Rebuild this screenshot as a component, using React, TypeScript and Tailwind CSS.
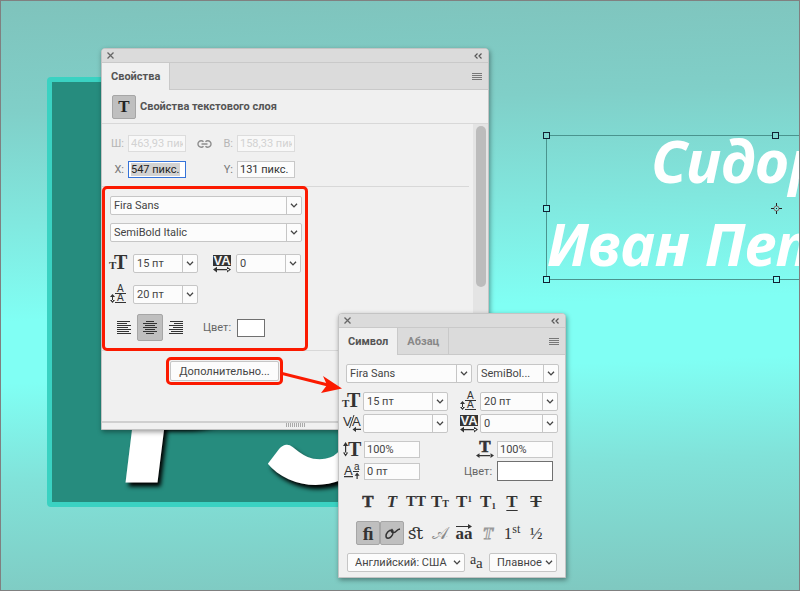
import type { ReactNode } from "react";

interface SelectProps {
    label: string;
    options: string[];
    className?: string;
    plain?: boolean;
}

const Select = ({ label, options, className = "", plain = false }: SelectProps) => (
    <span className={`relative block h-[19px] rounded-[2px] border border-[#c6c6c6] bg-[#fcfcfc] ${className}`}>
        <select
            aria-label={label}
            className={`block h-full w-full appearance-none bg-transparent outline-none ${plain ? "pl-[7px] pr-2" : "pl-[3px] pr-4"}`}
        >
            {options.map((option) => (
                <option key={option}>{option}</option>
            ))}
        </select>
        <span className={`pointer-events-none absolute inset-y-0 right-0 flex w-[15px] items-center justify-center ${plain ? "" : "border-l border-[#c6c6c6]"}`}>
            <svg width="8" height="5" viewBox="0 0 8 5" fill="none" stroke="#444" strokeWidth="1.3">
                <path d="M1 .7 4 3.9 7 .7" />
            </svg>
        </span>
    </span>
);

interface FieldProps {
    id: string;
    value: string;
    className?: string;
    disabled?: boolean;
    active?: boolean;
}

const Field = ({ id, value, className = "", disabled = false, active = false }: FieldProps) => (
    <input
        id={id}
        aria-label={id}
        defaultValue={value}
        disabled={disabled}
        autoFocus={active}
        onFocus={(e) => e.currentTarget.select()}
        className={`h-[17px] min-w-0 border px-0.5 outline-none selection:bg-[#d2d2d2] selection:text-[#222] ${
            active ? "border-[#3573d9] bg-white" : disabled ? "border-[#dcdcdc] bg-[#f8f8f8] text-[#d2d2d2]" : "border-[#c8c8c8] bg-[#fcfcfc]"
        } ${className}`}
    />
);

const serif = "font-['Liberation_Serif',serif]";

const SizeIcon = () => (
    <svg width="18" height="18" viewBox="0 0 18 18" fill="#333" className={`shrink-0 overflow-visible font-bold ${serif}`}>
        <text x="4" y="14" fontSize="20">T</text>
        <text x="-1" y="14" fontSize="11">T</text>
    </svg>
);

const LeadingIcon = () => (
    <svg width="18" height="18" viewBox="0 0 18 18" fill="#333" className="shrink-0 overflow-visible font-['Liberation_Sans',sans-serif]">
        <text x="7" y="6" fontSize="10">A</text>
        <text x="7" y="15" fontSize="10">A</text>
        <path d="M5 7h11v1H5zM5 16h11v1H5zM2 9h1v6H2zM0 11l2.500-3L5 11zM0 14l2.500 3L5 14z" />
    </svg>
);

const TrackingIcon = () => (
    <svg width="18" height="18" viewBox="0 0 18 18" className="shrink-0 font-['Liberation_Sans',sans-serif] font-bold">
        <rect width="18" height="11" fill="#333" />
        <text x="9" y="10" fontSize="13" fill="#f4f4f4" textAnchor="middle">VA</text>
        <path d="M2 14h14v1.200H2zM0 14.600l4-2.800v5.600zM18 14.600l-4-2.800v5.600z" fill="#333" />
    </svg>
);

const KerningIcon = () => (
    <svg width="18" height="18" viewBox="0 0 18 18" fill="#333" className="shrink-0 overflow-visible font-['Liberation_Sans',sans-serif]">
        <text x="0" y="11" fontSize="13">V</text>
        <text x="9" y="11" fontSize="13">A</text>
        <path d="M10.500 0h1L7 13H6zM12 13.800h6v1.200h-6zM9.500 14.400l3.500-2.700v5.400z" />
    </svg>
);

const VScaleIcon = () => (
    <svg width="18" height="16" viewBox="0 0 18 16" fill="#333" className={`shrink-0 overflow-visible font-bold ${serif}`}>
        <text x="5" y="14" fontSize="20">T</text>
        <path d="M2 3h1.200v9H2zM0 4l2.600-4 2.600 4zM0 10.500l2.600 4 2.600-4z" />
    </svg>
);

const HScaleIcon = () => (
    <svg width="18" height="17" viewBox="0 0 18 17" fill="#333" className={`shrink-0 overflow-visible font-bold ${serif}`}>
        <text x="9" y="11" fontSize="17" textAnchor="middle" stroke="#333" strokeWidth=".6">T</text>
        <path d="M3 14h12v1.200H3zM0 14.600l3.500-2.400v4.800zM18 14.600l-3.500-2.400v4.800z" />
    </svg>
);

const BaselineIcon = () => (
    <svg width="17" height="17" viewBox="0 0 17 17" fill="#333" className="shrink-0 overflow-visible font-['Liberation_Sans',sans-serif]">
        <text x="0" y="12" fontSize="13">A</text>
        <text x="10" y="7" fontSize="10">a</text>
        <path d="M0 13h9v1.200H0zM9 8h6v1H9zM12.500 11h1.200v5h-1.200zM10.600 12.800l2.500-3.200 2.500 3.200z" />
    </svg>
);

const AntialiasIcon = () => (
    <svg width="16" height="14" viewBox="0 0 16 14" fill="#333" className={`shrink-0 ${serif}`}>
        <text x="1" y="8" fontSize="14">a</text>
        <text x="7" y="12" fontSize="15">a</text>
    </svg>
);

const LinkIcon = () => (
    <svg width="15" height="8" viewBox="0 0 15 8" fill="none" stroke="#8d8d8d" strokeWidth="1.400">
        <path d="M6.500 1.800A3.200 3.200 0 1 0 6.500 6.200M8.500 1.800A3.200 3.200 0 1 1 8.500 6.200M4.500 4h6" />
    </svg>
);

const alignRows: Record<string, number[]> = {
    left: [13, 10, 14, 11, 14, 12, 14],
    center: [8, 14, 10, 14, 10, 14, 8],
    right: [13, 9, 14, 10, 14, 12, 14],
};

const AlignIcon = ({ align }: { align: "left" | "center" | "right" }) => (
    <svg width="14" height="14" viewBox="0 0 14 14" fill="#333">
        {alignRows[align].map((width, i) => (
            <rect key={i} x={align === "left" ? 0 : align === "center" ? (14 - width) / 2 : 14 - width} y={i * 2} width={width} height="1" />
        ))}
    </svg>
);

interface WindowProps {
    tabs: string[];
    children: ReactNode;
    className: string;
}

const PanelWindow = ({ tabs, children, className }: WindowProps) => (
    <section className={`absolute flex flex-col rounded-t-[4px] border border-[#c4c4c4] bg-[#f0f0f0] shadow-[1px_2px_5px_rgba(0,0,0,0.4)] ${className}`}>
        <header className="flex h-[13px] items-center justify-between rounded-t-[3px] bg-[#dbdbdb] px-[5px]">
            <button aria-label="Закрыть">
                <svg width="7" height="7" viewBox="0 0 7 7" stroke="#666" strokeWidth="1.300">
                    <path d="M.5.5l6 6M6.500.5l-6 6" />
                </svg>
            </button>
            <button aria-label="Свернуть">
                <svg width="9" height="6" viewBox="0 0 9 6" fill="none" stroke="#555" strokeWidth="1.200">
                    <path d="M3.500.5L1 3l2.500 2.500M7.500.5L5 3l2.500 2.500" />
                </svg>
            </button>
        </header>
        <nav className="flex h-7 border-t border-[#c9c9c9] bg-[#dbdbdb] font-bold">
            {tabs.map((tab, i) => (
                <button
                    key={tab}
                    className={`border-r border-[#c9c9c9] px-[9px] ${i === 0 ? "bg-[#f0f0f0] text-[#555]" : "border-b text-[#888]"}`}
                >
                    {tab}
                </button>
            ))}
            <span className="flex flex-1 items-center justify-end border-b border-[#c9c9c9] pr-[6px]">
                <button aria-label="Меню">
                    <svg width="10" height="7" viewBox="0 0 10 7" fill="#777">
                        <path d="M0 0h10v1H0zM0 2h10v1H0zM0 4h10v1H0zM0 6h10v1H0z" />
                    </svg>
                </button>
            </span>
        </nav>
        {children}
    </section>
);

const PropertiesPanel = () => (
    <PanelWindow tabs={["Свойства"]} className="left-[101px] top-12 w-[388px]">
        <div className="flex h-[34px] items-center gap-1 border-b border-[#d8d8d8] pl-[10px] font-bold text-[#555]">
            <span className={`flex size-6 items-center justify-center rounded-[2px] border border-[#a6a6a6] bg-[#bfbfbf] text-[17px] text-[#222] ${serif}`}>T</span>
            <h2>Свойства текстового слоя</h2>
        </div>
        <div className="flex h-[297px]">
            <div className="flex-1">
                <div className="grid grid-cols-[22px_58px_28px_11px_58px] items-center gap-x-1 gap-y-[9px] pb-2 pt-[11px] text-right text-[#777]">
                    <label htmlFor="width" className="text-[#b5b5b5]">Ш:</label>
                    <Field id="width" value="463,93 пикс." disabled />
                    <span className="flex justify-center"><LinkIcon /></span>
                    <label htmlFor="height" className="text-[#b5b5b5]">В:</label>
                    <Field id="height" value="158,33 пикс." disabled />
                    <label htmlFor="x">X:</label>
                    <Field id="x" value="547 пикс." active className="text-[#333]" />
                    <span />
                    <label htmlFor="y">Y:</label>
                    <Field id="y" value="131 пикс." className="text-[#333]" />
                </div>
                <div className="relative mr-1 border-y border-[#d8d8d8] pb-[9px] pl-2 pt-[9px]">
                    <div className="pointer-events-none absolute -inset-y-px left-0 w-[206px] rounded-[5px] border-[3px] border-[#fb1a00]" />
                    <Select label="Шрифт" options={["Fira Sans"]} className="w-48" />
                    <Select label="Начертание" options={["SemiBold Italic"]} className="mt-2 w-48" />
                    <div className="mt-3 flex items-center">
                        <SizeIcon />
                        <Select label="Кегль" options={["15 пт"]} className="ml-[5px] mr-[15px] w-[65px]" />
                        <TrackingIcon />
                        <Select label="Трекинг" options={["0"]} className="ml-[5px] w-[65px]" />
                    </div>
                    <div className="mt-3 flex items-center">
                        <LeadingIcon />
                        <Select label="Интерлиньяж" options={["20 пт"]} className="ml-[5px] w-[65px]" />
                    </div>
                    <div className="mt-[10px] flex items-center pl-[7px]">
                        <button aria-label="По левому краю"><AlignIcon align="left" /></button>
                        <button aria-label="По центру" className="mx-[6px] flex h-[27px] w-[26px] items-center justify-center rounded-[2px] border border-[#a6a6a6] bg-[#bfbfbf]">
                            <AlignIcon align="center" />
                        </button>
                        <button aria-label="По правому краю"><AlignIcon align="right" /></button>
                        <span className="ml-5 w-[34px] text-[#666]">Цвет:</span>
                        <button aria-label="Цвет текста" className="h-[18px] w-7 border border-[#707070] bg-white" />
                    </div>
                </div>
                <div className="mt-[6px] flex pl-16">
                    <span className="rounded-[5px] border-[3px] border-[#fb1a00] p-px">
                        <button className="block h-5 w-[109px] rounded-[2px] border border-[#c6c6c6] bg-[#fcfcfc]">Дополнительно...</button>
                    </span>
                </div>
            </div>
            <div className="w-[15px] bg-[#e4e4e4] pl-[3px] pt-0.5">
                <div className="h-[161px] w-[10px] rounded-full bg-[#bcbcbc]" />
            </div>
        </div>
        <footer className="flex h-2 justify-center border-t-2 border-[#cfcfcf]">
            <svg width="19" height="4" viewBox="0 0 19 4" fill="#aaa">
                <path d="M0 0h1v4H0zM2 0h1v4H2zM4 0h1v4H4zM6 0h1v4H6zM8 0h1v4H8zM10 0h1v4h-1zM12 0h1v4h-1zM14 0h1v4h-1zM16 0h1v4h-1zM18 0h1v4h-1z" />
            </svg>
        </footer>
    </PanelWindow>
);

interface Style {
    name: string;
    glyph: ReactNode;
    className?: string;
}

const textStyles: Style[] = [
    { name: "Полужирный", glyph: "T", className: "font-bold [-webkit-text-stroke:0.5px_#333]" },
    { name: "Курсив", glyph: "T", className: "font-bold italic" },
    { name: "Все прописные", glyph: "TT", className: "text-[15px] font-bold" },
    { name: "Капитель", glyph: <>T<small className="text-[10px]">T</small></>, className: "font-bold" },
    { name: "Надстрочный", glyph: <>T<sup className="text-[9px]">1</sup></>, className: "font-bold" },
    { name: "Подстрочный", glyph: <>T<sub className="text-[9px]">1</sub></>, className: "font-bold" },
    { name: "Подчеркнутый", glyph: "T", className: "font-bold underline underline-offset-3" },
    { name: "Зачеркнутый", glyph: "T", className: "font-bold line-through" },
];

const openType: Style[] = [
    { name: "Лигатуры", glyph: "ﬁ", className: "rounded-[2px] border border-[#a6a6a6] bg-[#bfbfbf] text-[19px] font-bold" },
    { name: "Контекстные", glyph: (
        <svg width="18" height="14" viewBox="0 0 18 14" fill="none" stroke="#333" strokeWidth="1.500">
            <path d="M9 4C5.500 4 3 7.500 3 10c0 3 3.500 2.800 5.300.5C10.500 8 10.500 4.500 9 3.500 7.500 4.500 8.500 7 11 6.500 13.500 6 13.500 3.500 17 3" />
        </svg>
    ), className: "rounded-[2px] border border-[#a6a6a6] bg-[#bfbfbf]" },
    { name: "Дополнительные лигатуры", glyph: "ﬆ", className: "font-['DejaVu_Serif',serif]" },
    { name: "Каллиграфические", glyph: "𝒜", className: "text-[#888]" },
    { name: "Стилистические", glyph: <span className="relative">aa<svg className="absolute left-0 top-0" width="17" height="5" viewBox="0 0 17 5" fill="#333"><path d="M0 2h13v1H0zM12 0l4 2.500L12 5z" /></svg></span>, className: "font-bold" },
    { name: "Титульные", glyph: "T", className: "font-bold italic text-[#f0f0f0] [-webkit-text-stroke:1px_#999]" },
    { name: "Порядковые", glyph: <>1<sup className="text-[12px]">st</sup></> },
    { name: "Дроби", glyph: "½" },
];

const StyleRow = ({ items, className }: { items: Style[]; className: string }) => (
    <div className={`flex pl-[17px] text-[17px] leading-none text-[#333] ${serif} ${className}`}>
        {items.map((item) => (
            <button key={item.name} aria-label={item.name} className={`flex w-6 items-center justify-center ${item.className ?? ""}`}>
                <span>{item.glyph}</span>
            </button>
        ))}
    </div>
);

const CharacterPanel = () => (
    <PanelWindow tabs={["Символ", "Абзац"]} className="left-[338px] top-[313px] w-[228px]">
        <div className="flex h-[222px] flex-col pt-[9px]">
            <div className="flex gap-[5px] pl-[7px]">
                <Select label="Семейство шрифтов" options={["Fira Sans"]} className="w-[126px]" />
                <Select label="Стиль шрифта" options={["SemiBol..."]} className="w-[82px]" />
            </div>
            <div className="mt-[9px] grid grid-cols-[20px_97px_20px_78px] items-center gap-y-[3px] pl-1">
                <SizeIcon />
                <Select label="Размер шрифта" options={["15 пт"]} className="w-[85px]" />
                <LeadingIcon />
                <Select label="Межстрочный интервал" options={["20 пт"]} />
                <KerningIcon />
                <Select label="Кернинг" options={[""]} className="w-[85px]" />
                <TrackingIcon />
                <Select label="Межсимвольный интервал" options={["0"]} />
            </div>
            <div className="mt-2 flex items-center pl-1">
                <VScaleIcon />
                <Field id="vscale" value="100%" className="ml-[3px] w-14" />
                <span className="ml-14"><HScaleIcon /></span>
                <Field id="hscale" value="100%" className="ml-[3px] w-14" />
            </div>
            <div className="mt-[3px] flex items-center pl-[5px]">
                <BaselineIcon />
                <Field id="baseline" value="0 пт" className="ml-[3px] w-14" />
                <span className="ml-11 w-[33px] text-[#666]">Цвет:</span>
                <button aria-label="Цвет символов" className="h-5 w-14 border border-[#707070] bg-white" />
            </div>
            <StyleRow items={textStyles} className="mt-2 h-6" />
            <StyleRow items={openType} className="mt-2 h-6" />
            <div className="mt-2 flex items-center pl-2">
                <Select label="Язык" options={["Английский: США"]} plain className="w-[118px]" />
                <span className="flex w-6 justify-center"><AntialiasIcon /></span>
                <Select label="Сглаживание" options={["Плавное"]} plain className="w-[68px]" />
            </div>
        </div>
    </PanelWindow>
);

const TextLayer = () => (
    <div className="absolute left-[546px] top-[135px] h-[145px] w-[464px] border border-[#4a948e] font-['Noto_Sans',sans-serif] text-[59px] font-bold italic leading-[83px] text-white">
        <p className="-mt-[17px] whitespace-nowrap pl-[104px]">Сидоров</p>
        <p className="whitespace-nowrap">Иван Петрович</p>
        <span className="absolute -left-1 -top-1 size-[7px] border border-[#123] bg-[#80d8d0]" />
        <span className="absolute -top-1 left-[225px] size-[7px] border border-[#123] bg-[#80d8d0]" />
        <span className="absolute -left-1 top-[69px] size-[7px] border border-[#123] bg-[#80f0e6]" />
        <span className="absolute -bottom-1 -left-1 size-[7px] border border-[#123] bg-[#80fff4]" />
        <span className="absolute -bottom-1 left-[226px] size-[7px] border border-[#123] bg-[#80fff4]" />
        <svg className="absolute left-[224px] top-[67px]" width="11" height="11" viewBox="0 0 11 11" fill="none" stroke="#222">
            <circle cx="5.500" cy="5.500" r="2.500" stroke="#866" />
            <path d="M5.500 0v3M5.500 8v3M0 5.500h3M8 5.500h3M5 5.500h1" />
        </svg>
    </div>
);

const Artboard = () => (
    <div className="absolute left-[47px] top-[77px] h-[430px] w-[380px] rounded-[4px] border-[5px] border-[#3ad2c2] bg-[#268c7e] font-['Lato',sans-serif] text-[222px] font-black italic leading-none text-white [text-shadow:3px_4px_4px_#000]">
        <span className="absolute left-[66px] top-[204px]">P</span>
        <span className="absolute left-[217px] top-[204px]">S</span>
    </div>
);

export default function App() {
    return (
        <main className="relative h-screen min-h-[591px] overflow-hidden border border-[#808080] bg-[linear-gradient(178deg,#7fc3bc_0%,#80cfc8_18%,#81e8df_36%,#80fff4_52%,#80fff4_62%,#81e2d9_78%,#7fc7bf_100%)] font-['Roboto',sans-serif] text-[11px] leading-[15px] text-[#444]">
            <div className="absolute -left-px -top-px h-full w-full">
                <Artboard />
                <TextLayer />
                <PropertiesPanel />
                <CharacterPanel />
                <svg className="pointer-events-none absolute left-[282px] top-[370px]" width="62" height="26" viewBox="0 0 62 26" fill="#fb1a00">
                    <path d="M0 3.500L46 15" stroke="#fb1a00" strokeWidth="3" />
                    <path d="M60 18.500L41 6l4 9-6 8z" />
                </svg>
            </div>
        </main>
    );
}
